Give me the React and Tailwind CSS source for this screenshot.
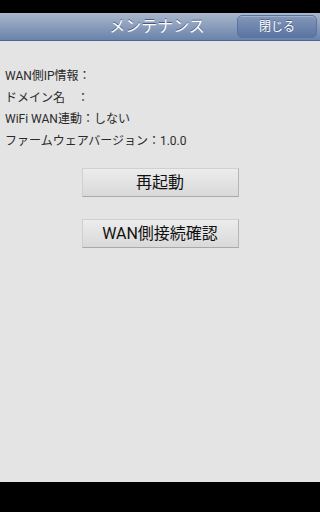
import { useState } from "react";

const font = { fontFamily: '"Roboto", "Noto Sans CJK JP", sans-serif' };

function Header() {
  return (
    <div className="relative h-[28px] flex items-center justify-center bg-gradient-to-b from-[#aab7cc] to-[#6a83ab] border-b border-[#4b6597]">
      <div className="text-[16px] text-white [text-shadow:0_-1px_0_rgba(40,60,100,0.7)] pr-[6px]">
        メンテナンス
      </div>
      <button className="absolute right-[3px] top-[2px] h-[23px] w-[80px] rounded-[5px] border border-[#5a73a0] bg-gradient-to-b from-[#8497ba] to-[#5a74a2] text-white text-[12px] [text-shadow:0_-1px_0_rgba(40,60,100,0.6)] shadow-[inset_0_1px_0_rgba(255,255,255,0.25)]">
        閉じる
      </button>
    </div>
  );
}

function InfoLines(props) {
  const rows = props.lines.map((line, index) => (
    <div key={index} className="h-[21.5px] leading-[21.5px] text-[12px] text-[#2a2a2a]">
      {line}
    </div>
  ));
  return <div className="pl-[5px]">{rows}</div>;
}

function GreyButton(props) {
  return (
    <button
      className="w-[157px] h-[29px] bg-gradient-to-b from-[#ececec] to-[#d9d9d9] border border-[#d0d0d0] border-b-[#a9a9a9] border-r-[#b5b5b5] text-[16px] text-[#111] leading-none"
      onClick={props.onClick}
    >
      {props.label}
    </button>
  );
}

export default function App() {
  const [log, setLog] = useState("");
  return (
    <div className="w-[320px] h-[512px] flex flex-col bg-black overflow-hidden" style={font}>
      <div className="h-[13px] bg-black" />
      <Header />
      <div className="flex-1 bg-[#e4e4e4] pt-[25px]">
        <InfoLines
          lines={[
            "WAN側IP情報：",
            "ドメイン名　：",
            "WiFi WAN連動：しない",
            "ファームウェアバージョン：1.0.0",
          ]}
        />
        <div className="flex flex-col items-center gap-[22px] mt-[16px]" data-log={log}>
          <GreyButton label="再起動" onClick={() => setLog("reboot")} />
          <GreyButton label="WAN側接続確認" onClick={() => setLog("check")} />
        </div>
      </div>
      <div className="h-[30px] bg-black" />
    </div>
  );
}
